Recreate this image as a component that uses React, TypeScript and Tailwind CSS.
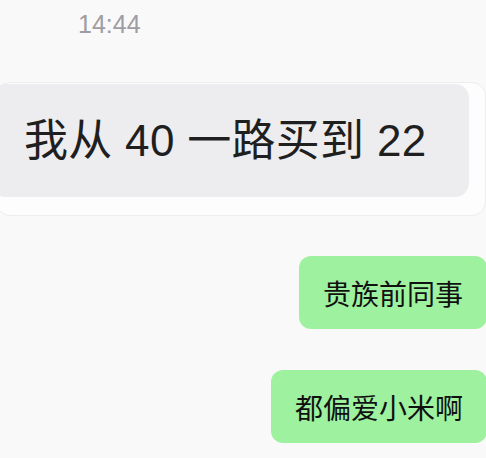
export default function App() {
  const cjk = { fontFamily: '"Noto Sans CJK SC", "Noto Sans", sans-serif' };
  const mixed = { fontFamily: '"Liberation Sans", "Noto Sans CJK SC", sans-serif' };
  return (
    <div className="w-[486px] h-[458px] overflow-hidden bg-[#f9f9f9] flex flex-col">
      <div
        className="pl-[78px] pt-[10px] h-[40px] text-[25px] leading-[28px] text-[#9d9da3]"
        style={{ fontFamily: '"Liberation Sans", Arial, sans-serif' }}
      >
        14:44
      </div>
      <div className="mt-[42px] ml-[-4px] w-[490px] h-[134px] rounded-[14px] border border-[#ededed] bg-[#fdfdfd] pt-[1px] shrink-0">
        <div
          className="ml-[-6px] w-[478px] h-[113px] rounded-[14px] bg-[#ededf0] flex items-center pl-[33px] text-[44px] tracking-[0.3px] text-[#1f1f1f] whitespace-nowrap"
          style={mixed}
        >
          我从 40 一路买到 22
        </div>
      </div>
      <div className="flex flex-col items-end gap-[41px] mt-[40px] mr-[-1px]" style={cjk}>
        <div className="h-[73px] rounded-[12px] bg-[#9ef19e] px-[24px] flex items-center text-[28px] text-[#111]">
          贵族前同事
        </div>
        <div className="h-[73px] rounded-[12px] bg-[#9ef19e] px-[24px] flex items-center text-[28px] text-[#111]">
          都偏爱小米啊
        </div>
      </div>
    </div>
  );
}
